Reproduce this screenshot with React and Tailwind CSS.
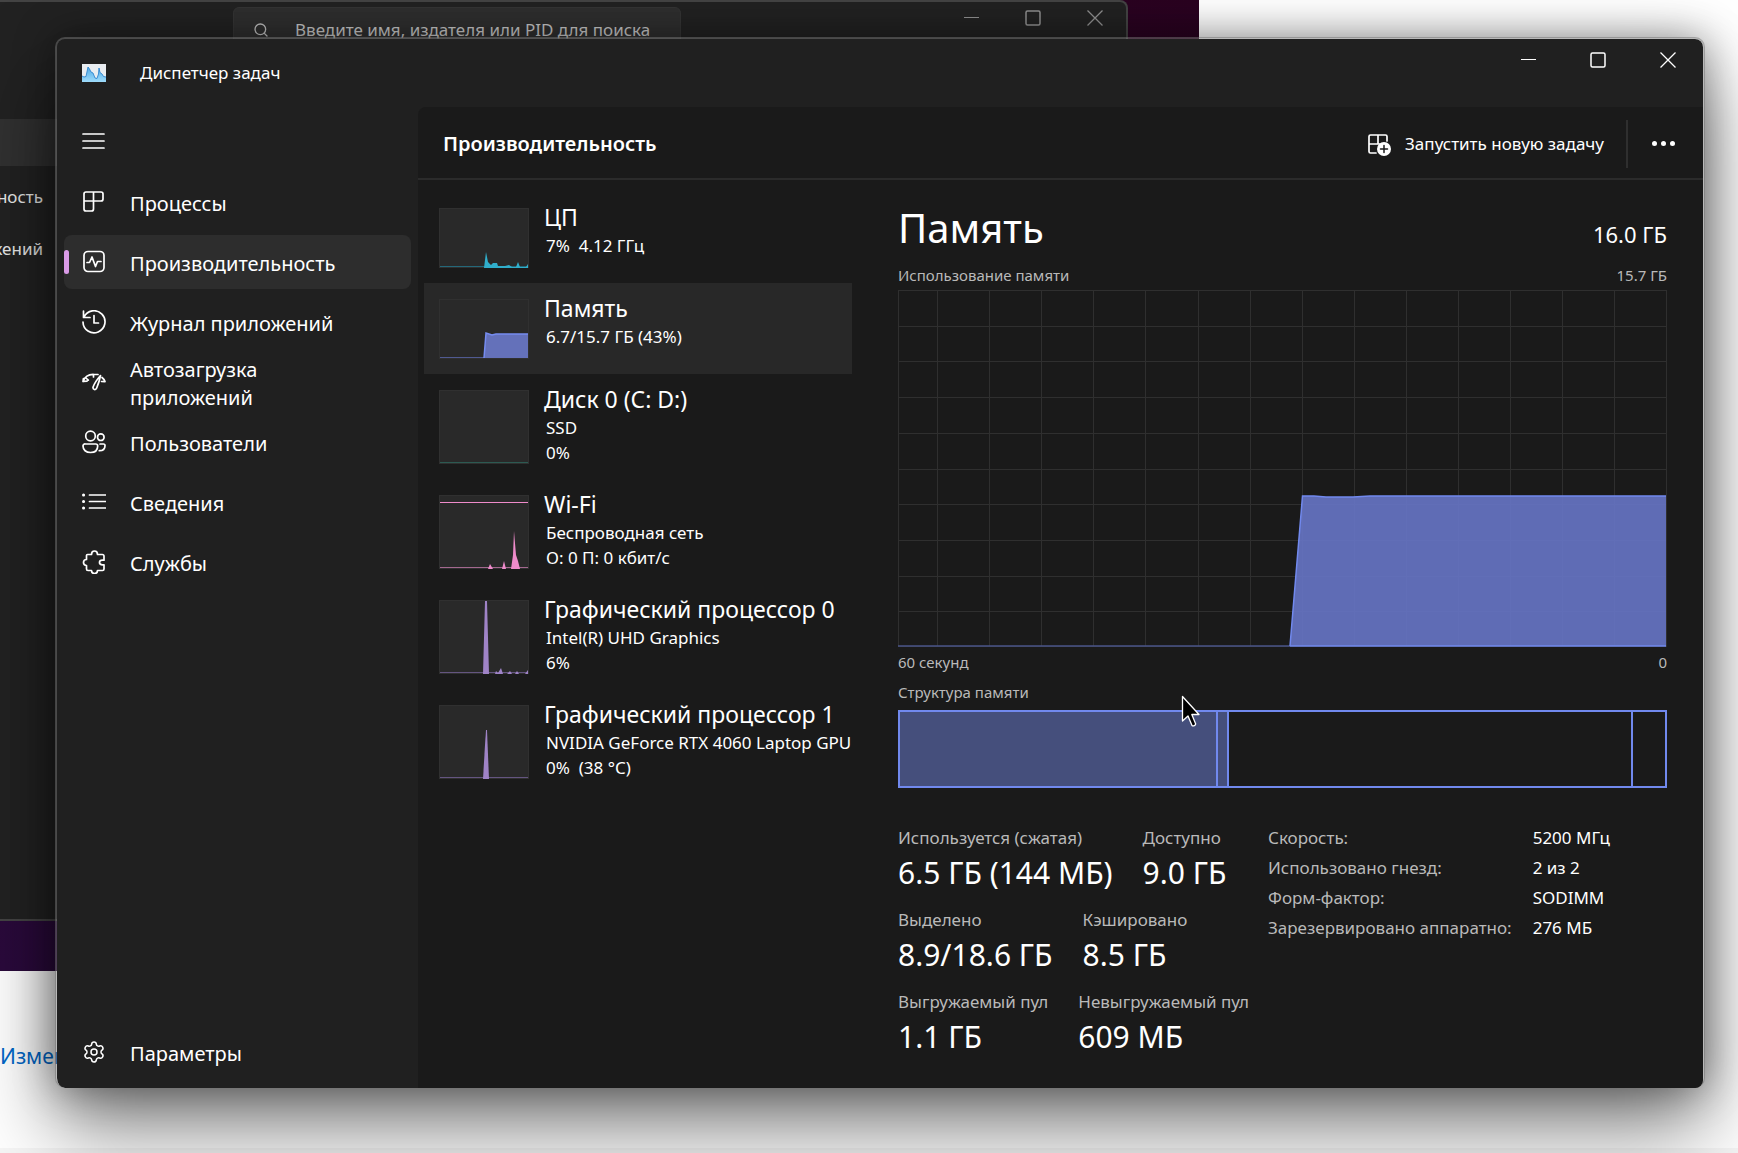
import { Settings, Search } from "lucide-react";

function Icon({ children, size = "size-6", width = 1.7 }) {
  return (
    <svg
      viewBox="0 0 24 24"
      className={`${size} shrink-0`}
      fill="none"
      stroke="currentColor"
      strokeWidth={width}
      strokeLinecap="round"
      strokeLinejoin="round"
      aria-hidden="true"
    >
      {children}
    </svg>
  );
}

const MenuIcon = () => (
  <Icon>
    <path d="M1 4h21M1 11h21M1 18h21" />
  </Icon>
);

const ProcessesIcon = () => (
  <Icon>
    <path d="M4 2h15a2 2 0 0 1 2 2v5a2 2 0 0 1-2 2h-7.500v8a2 2 0 0 1-2 2H4a2 2 0 0 1-2-2V4a2 2 0 0 1 2-2zM11.500 2v9H2" />
  </Icon>
);

const PerformanceIcon = () => (
  <Icon>
    <rect x="2" y="1.500" width="20" height="20" rx="4" />
    <path d="M5 12.500h2.500L10 7l3.500 9.500 2-5H19" />
  </Icon>
);

const HistoryIcon = () => (
  <Icon>
    <path d="M1.500 1v6.500H8M2 7.200A11 11 0 1 1 1 12M12 5.500v7.500h4.500" />
  </Icon>
);

const StartupIcon = () => (
  <Icon>
    <path d="M1 11.500C3 6.500 7 4.200 12 4.500h4M1 11.500l.4-3M1 11.500l4-.4M4.500 8.500l1.800 1.700M11.500 4.500v2.500M20 7.500c1.500 1.200 2.500 2.500 3 4M19.500 11.500l3.500.2M18.500 5.500c-3.500 4-6 7.500-7.400 11.500-.6 2.700 2.600 3.500 3.600 1 1.600-4 3-8 3.800-12.500z" />
  </Icon>
);

const UsersIcon = () => (
  <Icon>
    <circle cx="8.500" cy="6" r="4.800" />
    <circle cx="18.800" cy="7.200" r="3.300" />
    <path d="M3.500 14h10.200a2 2 0 0 1 2 2c0 4-2.800 6.500-7.200 6.500S1 20 1 16a2 2 0 0 1 2.500-2zM18 14h3.500a1.500 1.500 0 0 1 1.500 1.700c0 3.200-2.300 5-5.700 5" />
  </Icon>
);

const DetailsIcon = () => (
  <Icon>
    <path d="M7.500 5h16M7.500 11.500h16M7.500 18h16" />
    <path d="M1.500 5h.1M1.500 11.500h.1M1.500 18h.1" strokeWidth="3" />
  </Icon>
);

const ServicesIcon = () => (
  <Icon>
    <path d="M4.500 5.500a1 1 0 0 1 1-1h4c0-2.200 1-3.500 3-3.500s3 1.300 3 3.500h4.800a1.700 1.700 0 0 1 1.700 1.700v4h-1.500c-2 0-3 .8-3 2.300s1 2.300 3 2.300H22v4.200a1.500 1.500 0 0 1-1.500 1.500h-5c0 2-1 3-3 3s-3-1-3-3H6a1.500 1.500 0 0 1-1.500-1.500v-3.500C2.500 15.500 1.500 14.300 1.500 12.500s1-3 3-3z" />
  </Icon>
);

const NewTaskIcon = () => (
  <Icon>
    <path d="M9 21H3.500A1.500 1.500 0 0 1 2 19.500v-15A1.500 1.500 0 0 1 3.500 3h15A1.500 1.500 0 0 1 20 4.500V9M11 3v9H2M11 12h2" />
    <circle cx="17" cy="17" r="7" fill="currentColor" stroke="none" />
    <path d="M17 13.500v7M13.500 17h7" stroke="#1a1a1a" strokeWidth="1.500" />
  </Icon>
);

const MinimizeGlyph = () => (
  <svg viewBox="0 0 16 16" className="size-4" stroke="currentColor" aria-hidden="true">
    <path d="M1 7.500h15" />
  </svg>
);
const MaximizeGlyph = () => (
  <svg viewBox="0 0 16 16" className="size-4" stroke="currentColor" strokeWidth="1.500" fill="none" aria-hidden="true">
    <rect x="1" y="1" width="14" height="14" rx="1.500" />
  </svg>
);
const CloseGlyph = () => (
  <svg viewBox="0 0 16 16" className="size-4" stroke="currentColor" strokeWidth="1.300" aria-hidden="true">
    <path d="M.5.5l15 15M15.500.5l-15 15" />
  </svg>
);

const AppLogo = () => (
  <svg viewBox="0 0 24 18" className="h-[18px] w-6 shrink-0" aria-hidden="true">
    <defs>
      <linearGradient id="logo" x1="0" y1="0" x2="0" y2="1">
        <stop offset="0" stopColor="#4fa9e6" />
        <stop offset="1" stopColor="#9edcfb" />
      </linearGradient>
    </defs>
    <rect width="24" height="18" fill="#e9edf1" />
    <path
      d="M0 12l2 1 2-.5L6 3l1.500 2L9 8l2 1 2 5 2 .5L16.500 10 17 4l1 4.500 2 1.500 1.500 2.500L24 13v5H0z"
      fill="url(#logo)"
    />
    <path
      d="M0 12l2 1 2-.5L6 3l1.500 2L9 8l2 1 2 5 2 .5L16.500 10 17 4l1 4.500 2 1.500 1.500 2.500L24 13"
      fill="none"
      stroke="#2f86cf"
      strokeWidth=".9"
    />
  </svg>
);

function WindowButtons({ buttonClass }) {
  return (
    <div className="flex">
      <button type="button" aria-label="Свернуть" className={buttonClass}>
        <MinimizeGlyph />
      </button>
      <button type="button" aria-label="Развернуть" className={buttonClass}>
        <MaximizeGlyph />
      </button>
      <button type="button" aria-label="Закрыть" className={buttonClass}>
        <CloseGlyph />
      </button>
    </div>
  );
}

function NavItem({ icon, label, active }) {
  return (
    <button
      type="button"
      aria-current={active ? "page" : undefined}
      className={`relative flex h-[54px] w-full shrink-0 items-center gap-6 rounded-lg pl-[18px] text-left ${active ? "bg-[#2d2d2d]" : ""}`}
    >
      {active && <span className="absolute left-0 h-6 w-[5px] rounded-full bg-[#d99ae6]" />}
      {icon}
      <span className="w-[210px] pt-1 text-[20px] leading-7">{label}</span>
    </button>
  );
}

const NAV = [
  { label: "Процессы", icon: <ProcessesIcon /> },
  { label: "Производительность", icon: <PerformanceIcon />, active: true },
  { label: "Журнал приложений", icon: <HistoryIcon /> },
  { label: "Автозагрузка приложений", icon: <StartupIcon /> },
  { label: "Пользователи", icon: <UsersIcon /> },
  { label: "Сведения", icon: <DetailsIcon /> },
  { label: "Службы", icon: <ServicesIcon /> },
];

const RESOURCES = [
  {
    name: "ЦП",
    lines: ["7%  4.12 ГГц"],
    color: "#30aecb",
    base: "#24687a",
    area: "M45 60L47 44L49 54L52 57L54 55H58L59 58H66L70 57L73 59H77L79 54L81 59H87L89 56V60Z",
  },
  {
    name: "Память",
    lines: ["6.7/15.7 ГБ (43%)"],
    color: "#6471ba",
    base: "#505a91",
    selected: true,
    area: "M45 59L47 34L53 36L57 35H89V59Z",
    line: "M45 59L47 34L53 36L57 35H89",
  },
  { name: "Диск 0 (C: D:)", lines: ["SSD", "0%"], color: "#2c6b5e", base: "#2c5a52" },
  {
    name: "Wi-Fi",
    lines: ["Беспроводная сеть", "О: 0 П: 0 кбит/с"],
    color: "#ef8bcb",
    base: "#a3688f",
    limit: true,
    area: "M49 74L51 69L54 74H63L65 66L67 74H72L74 60L75 36L77 60L79 66L81 74Z",
  },
  {
    name: "Графический процессор 0",
    lines: ["Intel(R) UHD Graphics", "6%"],
    color: "#9f83c6",
    base: "#645580",
    area: "M44 74L46 1H48L50 74H56L57 71L59 73L62 68L64 74H68L71 71L73 74H76L78 71L80 74H86L89 70V74Z",
  },
  {
    name: "Графический процессор 1",
    lines: ["NVIDIA GeForce RTX 4060 Laptop GPU", "0%  (38 °C)"],
    color: "#9f83c6",
    base: "#645580",
    area: "M44 74L46 40L47 25H48L50 74Z",
  },
];

function Thumb({ item }) {
  const h = item.lines.length > 1 ? 74 : 60;
  return (
    <svg
      viewBox={`0 0 90 ${h}`}
      className={`mt-4 w-[90px] shrink-0 bg-[#292929] ${h === 74 ? "h-[74px]" : "h-[60px]"}`}
      aria-hidden="true"
    >
      <rect x=".5" y=".5" width="89" height={h - 1} fill="none" stroke="#303030" />
      <path d={`M1 ${h - 1.5}H89`} stroke={item.base} />
      {item.limit && <path d="M1 7.500H89" stroke={item.color} />}
      {item.area && <path d={item.area} fill={item.color} />}
      {item.line && <path d={item.line} fill="none" stroke="#758cf0" strokeWidth="1.500" />}
    </svg>
  );
}

function Resource({ item }) {
  return (
    <button
      type="button"
      className={`flex w-full items-start gap-[15px] pb-[15px] pl-[15px] text-left ${item.selected ? "bg-[#282828]" : ""}`}
    >
      <Thumb item={item} />
      <span className="flex flex-col pt-2.5 whitespace-pre">
        <span className="h-[31px] text-[23px] leading-[30px]">{item.name}</span>
        {item.lines.map((line, i) => (
          <span key={line} className={`pl-0.5 text-[17px] leading-[25px] ${i === 1 ? "-mb-5" : ""}`}>
            {line}
          </span>
        ))}
      </span>
    </button>
  );
}

const GRID_X = Array.from({ length: 14 }, (_, i) => Math.floor(39.5 + i * 52.1) + 0.5).filter((x) => x < 765);
const GRID_Y = Array.from({ length: 9 }, (_, i) => Math.round((i + 1) * 35.7) + 0.5);

function MemoryChart() {
  return (
    <svg
      viewBox="0 0 769 357"
      preserveAspectRatio="none"
      className="mt-[5px] block h-[357px] w-full"
      role="img"
      aria-label="Использование памяти"
    >
      <g stroke="#2f2f2f" fill="none">
        <rect x=".5" y=".5" width="768" height="356" />
        {GRID_X.map((x) => (
          <path key={x} d={`M${x} 0V357`} />
        ))}
        {GRID_Y.map((y) => (
          <path key={y} d={`M0 ${y}H769`} />
        ))}
      </g>
      <path d="M0 356H392" stroke="#4a5488" strokeWidth="1.500" />
      <path d="M392 356L404.500 206H416L428 207H455L472 206H768V356Z" fill="#6776c6" fillOpacity=".9" />
      <path d="M392 356L404.500 206H416L428 207H455L472 206H768M392 356H768" fill="none" stroke="#7189ee" strokeWidth="1.500" />
    </svg>
  );
}

function Stat({ label, value }) {
  return (
    <div className="whitespace-nowrap">
      <dt className="text-[17px] leading-[30px] text-[#b9b9b9]">{label}</dt>
      <dd className="text-[30px] leading-10">{value}</dd>
    </div>
  );
}

const STATS = [
  [["Используется (сжатая)", "6.5 ГБ (144 МБ)"], ["Доступно", "9.0 ГБ"]],
  [["Выделено", "8.9/18.6 ГБ"], ["Кэшировано", "8.5 ГБ"]],
  [["Выгружаемый пул", "1.1 ГБ"], ["Невыгружаемый пул", "609 МБ"]],
];

const HARDWARE = [
  ["Скорость:", "5200 МГц"],
  ["Использовано гнезд:", "2 из 2"],
  ["Форм-фактор:", "SODIMM"],
  ["Зарезервировано аппаратно:", "276 МБ"],
];

function Details() {
  return (
    <section className="min-w-0 flex-1 pt-[23px] pr-9 pb-6 pl-[46px]">
      <div className="flex items-baseline justify-between">
        <h2 className="text-[40px] leading-[50px]">Память</h2>
        <span className="text-[22px]">16.0 ГБ</span>
      </div>
      <div className="mt-3 flex justify-between text-[15px] leading-5 text-[#b9b9b9]">
        <span>Использование памяти</span>
        <span>15.7 ГБ</span>
      </div>
      <MemoryChart />
      <div className="mt-[5px] flex justify-between text-[15px] leading-5 text-[#b9b9b9]">
        <span>60 секунд</span>
        <span>0</span>
      </div>
      <div className="mt-2.5 text-[15px] leading-5 text-[#b9b9b9]">Структура памяти</div>
      <div className="mt-2 flex h-[78px] border-2 border-[#7189ee]">
        <div className="w-[318px] border-r-2 border-[#7189ee] bg-[#454f7c]" />
        <div className="w-[11px] border-r-2 border-[#7189ee] bg-[#454f7c]" />
        <div className="flex-1" />
        <div className="w-[34px] border-l-2 border-[#7189ee]" />
      </div>
      <div className="mt-[35px] flex items-start">
        <div className="flex w-[370px] shrink-0 flex-col gap-3">
          {STATS.map((row) => (
            <dl key={row[0][0]} className="flex gap-[30px]">
              {row.map(([label, value]) => (
                <Stat key={label} label={label} value={value} />
              ))}
            </dl>
          ))}
        </div>
        <table className="text-left text-[17px] leading-[30px] whitespace-nowrap">
          <tbody>
            {HARDWARE.map(([label, value]) => (
              <tr key={label}>
                <th scope="row" className="p-0 pr-[21px] font-normal text-[#b9b9b9]">
                  {label}
                </th>
                <td className="p-0">{value}</td>
              </tr>
            ))}
          </tbody>
        </table>
      </div>
    </section>
  );
}

function Backdrop() {
  return (
    <div className="absolute inset-0 overflow-hidden bg-white">
      <div className="absolute top-0 left-0 h-[971px] w-[1199px] bg-linear-to-tr from-[#2a0a3c] to-[#2a0320]">
        <div className="relative h-[921px] w-[1128px] rounded-tr-lg border-t-2 border-r-2 border-b-2 border-[#444] bg-[#222]">
          <div className="flex items-start justify-between">
            <label className="ml-[233px] mt-[5px] flex h-[46px] w-[448px] items-center gap-[26px] rounded-md border border-[#353535] bg-[#2f2f2f] pl-[19px] text-[#c0c0c0]">
              <Search className="size-4 shrink-0" strokeWidth={2} />
              <input
                type="text"
                placeholder="Введите имя, издателя или PID для поиска"
                className="min-w-0 flex-1 bg-transparent text-[17px] placeholder:text-[#c8c8c8] focus:outline-none"
              />
            </label>
            <WindowButtons buttonClass="flex h-[31px] w-[62px] items-center justify-center text-[#909090]" />
          </div>
          <div className="mt-[66px] h-[47px] bg-[#313131]" />
          <div className="flex w-[43px] flex-col items-end pt-4 text-[17px] leading-[30px] text-[#e8e8e8]">
            <span>ность</span>
            <span className="mt-[22px]">жений</span>
          </div>
        </div>
      </div>
      <a href="#edit" className="absolute top-[1040px] left-0 text-[21px] leading-8 text-[#0067c8]">
        Изменить
      </a>
      <div className="absolute inset-x-0 bottom-0 h-[5px] bg-[#f6f6f6]" />
    </div>
  );
}

export default function App() {
  return (
    <div className="relative flex min-h-screen overflow-hidden pt-[37px] pr-[33px] pb-[65px] pl-[55px] font-['Noto_Sans','Open_Sans',sans-serif] text-white">
      <Backdrop />
      <main className="relative flex flex-1 flex-col rounded-[10px] border-2 border-b-0 border-[#757575]/50 bg-[#202020] bg-clip-padding shadow-[0_40px_80px_rgba(0,0,0,0.5),0_0_40px_rgba(0,0,0,0.4)]">
        <div className="flex h-[68px] shrink-0 justify-between">
          <div className="flex items-center gap-[34px] pl-[25px]">
            <AppLogo />
            <span className="text-[17px]">Диспетчер задач</span>
          </div>
          <WindowButtons buttonClass="flex h-[41px] w-[70px] items-center justify-center" />
        </div>
        <div className="flex flex-1">
          <nav className="flex w-[361px] shrink-0 flex-col gap-1.5 px-[7px] pt-2 pb-[9px]">
            <button type="button" aria-label="Меню" className="flex h-[54px] w-full items-center pl-[18px]">
              <MenuIcon />
            </button>
            {NAV.map((item) => (
              <NavItem key={item.label} {...item} />
            ))}
            <div className="flex flex-1 items-end">
              <NavItem label="Параметры" icon={<Settings className="size-6 shrink-0" strokeWidth={1.5} />} />
            </div>
          </nav>
          <div className="flex min-w-0 flex-1 flex-col rounded-tl-lg rounded-br-lg bg-[#1a1a1a]">
            <header className="flex h-[73px] shrink-0 items-center justify-between border-b-2 border-[#2b2b2b] pt-0.5 pr-4 pl-[25px]">
              <h1 className="text-[20px] font-semibold">Производительность</h1>
              <div className="flex items-center">
                <button type="button" className="flex items-center gap-3.5 pr-[22px] text-[17px]">
                  <NewTaskIcon />
                  Запустить новую задачу
                </button>
                <span className="h-12 w-0.5 bg-[#2f2f2f]" />
                <button type="button" aria-label="Ещё" className="ml-[11px] flex h-12 w-12 items-center justify-center gap-1">
                  <span className="size-[5px] rounded-full bg-white" />
                  <span className="size-[5px] rounded-full bg-white" />
                  <span className="size-[5px] rounded-full bg-white" />
                </button>
              </div>
            </header>
            <div className="flex flex-1">
              <div className="w-[434px] shrink-0 pt-3 pl-1.5">
                {RESOURCES.map((item) => (
                  <Resource key={item.name} item={item} />
                ))}
              </div>
              <Details />
            </div>
          </div>
        </div>
        {/* Mouse pointer */}
        <svg viewBox="0 0 20 32" className="pointer-events-none absolute top-[656px] left-[1124px] h-8 w-5" aria-hidden="true">
          <path
            d="M1.500 1.500V26L7 21l4 9.500c1 1 4-.3 3.600-1.800L10.800 19.500H18z"
            fill="#000"
            stroke="#fff"
            strokeWidth="1.300"
            strokeLinejoin="round"
          />
        </svg>
      </main>
    </div>
  );
}
